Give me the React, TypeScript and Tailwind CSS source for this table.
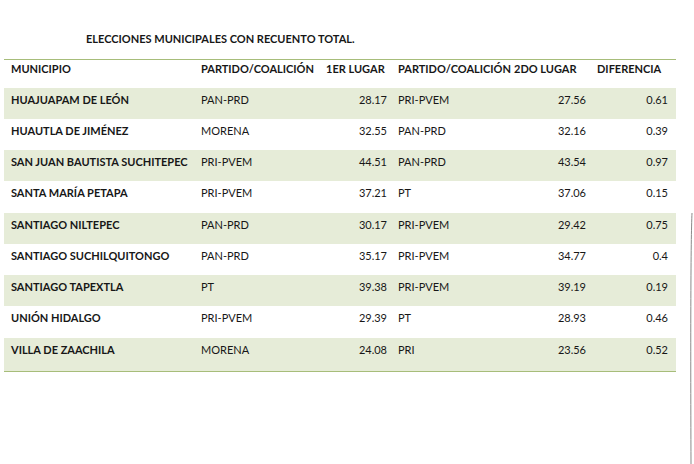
const rows = [
  ["HUAJUAPAM DE LEÓN", "PAN-PRD", "28.17", "PRI-PVEM", "27.56", "0.61"],
  ["HUAUTLA DE JIMÉNEZ", "MORENA", "32.55", "PAN-PRD", "32.16", "0.39"],
  ["SAN JUAN BAUTISTA SUCHITEPEC", "PRI-PVEM", "44.51", "PAN-PRD", "43.54", "0.97"],
  ["SANTA MARÍA PETAPA", "PRI-PVEM", "37.21", "PT", "37.06", "0.15"],
  ["SANTIAGO NILTEPEC", "PAN-PRD", "30.17", "PRI-PVEM", "29.42", "0.75"],
  ["SANTIAGO SUCHILQUITONGO", "PAN-PRD", "35.17", "PRI-PVEM", "34.77", "0.4"],
  ["SANTIAGO TAPEXTLA", "PT", "39.38", "PRI-PVEM", "39.19", "0.19"],
  ["UNIÓN HIDALGO", "PRI-PVEM", "29.39", "PT", "28.93", "0.46"],
  ["VILLA DE ZAACHILA", "MORENA", "24.08", "PRI", "23.56", "0.52"],
];

export default function App() {
  return (
    <div
      className="relative h-[464px] w-[694px] overflow-hidden bg-white text-[11px] leading-[15px] text-[#171717]"
      style={{ fontFamily: "Lato, 'Liberation Sans', sans-serif" }}
    >
      <div className="h-[46px] whitespace-nowrap pl-[86px] pt-[31px] font-bold">
        ELECCIONES MUNICIPALES CON RECUENTO TOTAL.
      </div>

      <table className="ml-[4px] mt-[13px] w-[672px] table-fixed border-collapse whitespace-nowrap border-y border-[#a7bd7a]">
        <colgroup>
          <col className="w-[192px]" />
          <col className="w-[125px]" />
          <col className="w-[71px]" />
          <col className="w-[113px]" />
          <col className="w-[86px]" />
          <col className="w-[85px]" />
        </colgroup>
        <thead>
          <tr className="h-[28px] align-top font-bold">
            <th className="pl-[7px] pt-[1px] text-left">MUNICIPIO</th>
            <th className="pl-[5px] pt-[1px] text-left">PARTIDO/COALICIÓN</th>
            <th className="pl-[5px] pt-[1px] text-left">1ER LUGAR</th>
            <th className="pl-[6px] pt-[1px] text-left">PARTIDO/COALICIÓN</th>
            <th className="pl-[9px] pt-[1px] text-left">2DO LUGAR</th>
            <th className="pl-[6px] pt-[1px] text-left">DIFERENCIA</th>
          </tr>
        </thead>
        <tbody>
          {rows.map((r, i) => (
            <tr
              key={r[0]}
              className={`align-top ${i === rows.length - 1 ? "h-[34px]" : "h-[31.25px]"} ${
                i % 2 === 0 ? "bg-[#e6ecd8]" : "bg-white"
              }`}
            >
              <td className="pl-[7px] pt-[4px] font-bold">{r[0]}</td>
              <td className="pl-[5px] pt-[4px]">{r[1]}</td>
              <td className="pr-[5px] pt-[4px] text-right">{r[2]}</td>
              <td className="pl-[6px] pt-[4px]">{r[3]}</td>
              <td className="pr-[5px] pt-[4px] text-right">{r[4]}</td>
              <td className="pr-[8px] pt-[4px] text-right">{r[5]}</td>
            </tr>
          ))}
        </tbody>
      </table>

      {/* scan edge on the right */}
      <svg className="absolute right-0 top-[210px]" width="6" height="254" viewBox="0 0 6 254">
        <path d="M4 3 C2.8 30 2.5 120 3 254" stroke="#8a8a8a" strokeWidth="1" fill="none" />
      </svg>
    </div>
  );
}
